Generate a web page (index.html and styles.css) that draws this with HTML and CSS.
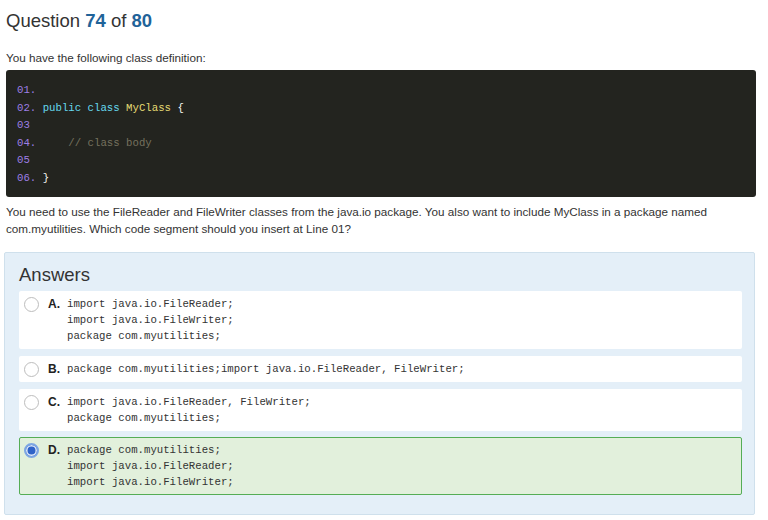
FILE: index.html
```html
<!DOCTYPE html>
<html>
<head>
<meta charset="utf-8">
<link rel="stylesheet" href="styles.css">
</head>
<body>
<div class="page">
  <h1 class="title">Question <b>74</b> of <b>80</b></h1>
  <p class="intro">You have the following class definition:</p>
  <pre class="code"><span class="ln">01.</span>
<span class="ln">02.</span> <span class="kw">public class</span> <span class="cls">MyClass</span> <span class="pl">{</span>
<span class="ln">03</span>
<span class="ln">04.</span>     <span class="cm">// class body</span>
<span class="ln">05</span>
<span class="ln">06.</span> <span class="pl">}</span></pre>
  <p class="question">You need to use the FileReader and FileWriter classes from the java.io package. You also want to include MyClass in a package named com.myutilities. Which code segment should you insert at Line 01?</p>
  <div class="answers">
    <h2 class="answers-title">Answers</h2>
    <div class="opt">
      <span class="radio"></span><span class="letter">A.</span>
      <pre class="opt-code">import java.io.FileReader;
import java.io.FileWriter;
package com.myutilities;</pre>
    </div>
    <div class="opt">
      <span class="radio"></span><span class="letter">B.</span>
      <pre class="opt-code">package com.myutilities;import java.io.FileReader, FileWriter;</pre>
    </div>
    <div class="opt">
      <span class="radio"></span><span class="letter">C.</span>
      <pre class="opt-code">import java.io.FileReader, FileWriter;
package com.myutilities;</pre>
    </div>
    <div class="opt opt-correct">
      <span class="radio radio-on"></span><span class="letter">D.</span>
      <pre class="opt-code">package com.myutilities;
import java.io.FileReader;
import java.io.FileWriter;</pre>
    </div>
  </div>
</div>
</body>
</html>
```
FILE: styles.css
```css
* { box-sizing: border-box; }
html, body { margin: 0; padding: 0; background: #fff; }
body { font-family: "Liberation Sans", Arial, sans-serif; color: #333; }
.page { padding: 0 12px 0 6px; }
.title {
  margin: 0; padding-top: 10px;
  font-size: 18.5px; font-weight: normal; line-height: 22px; color: #333;
}
.title b { color: #1f6399; font-weight: bold; }
.intro { margin: 18px 0 0; font-size: 11.7px; line-height: 16px; }
.code {
  margin: 4px 0 0; padding: 12px 11px 10px;
  background: #23241f; border-radius: 3px;
  font-family: "Liberation Mono", "DejaVu Sans Mono", monospace;
  font-size: 10.7px; line-height: 17.5px; color: #f8f8f2;
}
.ln { color: #9d7fe6; }
.kw { color: #66d9ef; }
.cls { color: #e6db74; }
.pl { color: #f8f8f2; }
.cm { color: #75715e; }
.question { margin: 6px 0 0; font-size: 11.7px; line-height: 17px; }
.answers {
  margin: 15px 0 0 -2px; width: 751px; height: 263px;
  background: #e4eff8; border: 1px solid #cfe0ec; border-radius: 2px;
  padding: 11px 12px 0 14px;
}
.answers-title {
  margin: 0 0 5px; font-size: 18.5px; font-weight: normal; line-height: 22px; color: #333;
}
.opt {
  display: flex; align-items: flex-start;
  background: #fff; border-radius: 2px;
  padding: 5px 6px 5px 5px; margin-bottom: 7px;
}
.opt-correct {
  background: #e2f0dc; border: 1px solid #55ad55;
  padding: 4px 5px 4px 4px; margin-top: -1px;
}
.radio {
  flex: none; width: 15px; height: 15px; margin: 1px 9px 0 0;
  border: 1px solid #bdbdbd; border-radius: 50%; background: #fff;
}
.radio-on {
  border: 2px solid #7ea7e3; background: #2f63c8;
  box-shadow: inset 0 0 0 1.5px #dfe9f8;
}
.letter { flex: none; font-weight: bold; font-size: 12px; line-height: 16px; width: 19px; color: #222; }
.opt-code {
  margin: 0; font-family: "Liberation Mono", "DejaVu Sans Mono", monospace;
  font-size: 10.7px; line-height: 16px; color: #333;
}
```
